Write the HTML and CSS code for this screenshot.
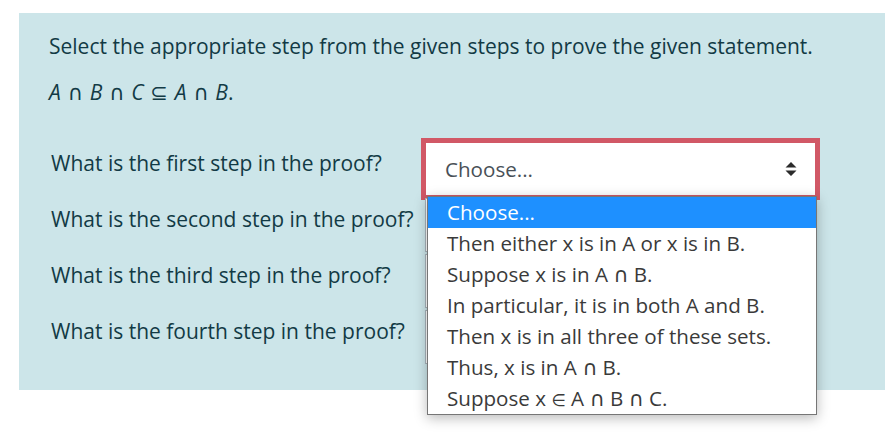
FILE: index.html
```html
<!DOCTYPE html>
<html lang="en">
<head>
<meta charset="utf-8">
<title>Proof steps</title>
<link rel="stylesheet" href="styles.css">
</head>
<body>
<div class="formulation">
  <p class="qtext">Select the appropriate step from the given steps to prove the given statement.</p>
  <p class="math"><i>A</i> ∩ <i>B</i> ∩ <i>C</i> ⊆ <i>A</i> ∩ <i>B</i>.</p>
  <div class="rows">
    <div class="row">
      <div class="label">What is the first step in the proof?</div>
      <div class="control">
        <div class="select focused">
          <span>Choose...</span>
          <svg class="arrows" width="12" height="16" viewBox="0 0 12 16"><path d="M6 1 L11.5 6.5 H0.5 Z M6 15 L11.5 9.5 H0.5 Z" fill="#2b2b2b"/></svg>
        </div>
        <ul class="listbox">
          <li class="active">Choose...</li>
          <li>Then either x is in A or x is in B.</li>
          <li>Suppose x is in A ∩ B.</li>
          <li>In particular, it is in both A and B.</li>
          <li>Then x is in all three of these sets.</li>
          <li>Thus, x is in A ∩ B.</li>
          <li>Suppose x <span class="sym">∈</span> A ∩ B ∩ C.</li>
        </ul>
      </div>
    </div>
    <div class="row">
      <div class="label">What is the second step in the proof?</div>
      <div class="control"><div class="select covered"><span>Choose...</span></div></div>
    </div>
    <div class="row">
      <div class="label">What is the third step in the proof?</div>
      <div class="control"><div class="select covered"><span>Choose...</span></div></div>
    </div>
    <div class="row">
      <div class="label">What is the fourth step in the proof?</div>
      <div class="control"><div class="select covered"><span>Choose...</span></div></div>
    </div>
  </div>
</div>
</body>
</html>
```
FILE: styles.css
```css
html, body {
  margin: 0;
  padding: 0;
  background: #ffffff;
}
body {
  font-family: "Open Sans", "DejaVu Sans", sans-serif;
  padding: 13px 0 49px 19px;
  min-height: 377px;
}
.formulation {
  background: #cce5e9;
  color: #123a45;
  padding: 18px 0 26px 30px;
  height: 333px;
  box-sizing: content-box;
}
.qtext {
  margin: 0;
  font-size: 21px;
  line-height: 31px;
}
.math {
  margin: 15px 0 0;
  font-size: 21px;
  line-height: 31px;
  word-spacing: 1.3px;
}
.math i {
  font-style: italic;
}
.rows {
  margin-top: 34px;
  display: flex;
  flex-direction: column;
  gap: 2px;
}
.row {
  display: flex;
  align-items: flex-start;
}
.label {
  width: 374px;
  padding-left: 2px;
  padding-top: 6px;
  font-size: 21px;
  line-height: 31px;
  white-space: nowrap;
}
.control {
  position: relative;
}
.select {
  box-sizing: border-box;
  width: 391px;
  height: 54px;
  background: #ffffff;
  border: 1px solid #a9b4bb;
  display: flex;
  align-items: center;
  justify-content: space-between;
  padding: 0 18px 0 19px;
  font-size: 20.6px;
  color: #495057;
}
.select.covered span {
  visibility: hidden;
}
.select.focused {
  border-color: #d15866;
  box-shadow: 0 0 0 4px #d15866;
}
.arrows {
  display: block;
}
.listbox {
  position: absolute;
  left: 2px;
  top: 54px;
  width: 390px;
  box-sizing: border-box;
  margin: 0;
  padding: 0;
  list-style: none;
  background: #ffffff;
  border: 1px solid #767676;
  box-shadow: 0 3px 12px rgba(0, 0, 0, 0.28);
  z-index: 5;
}
.listbox li {
  height: 31px;
  line-height: 31px;
  padding-left: 19px;
  font-size: 20.6px;
  color: #3a3a3a;
  white-space: nowrap;
}
.listbox li.active {
  background: #1e90ff;
  color: #ffffff;
}
.sym {
  font-size: 0.8em;
}
```
